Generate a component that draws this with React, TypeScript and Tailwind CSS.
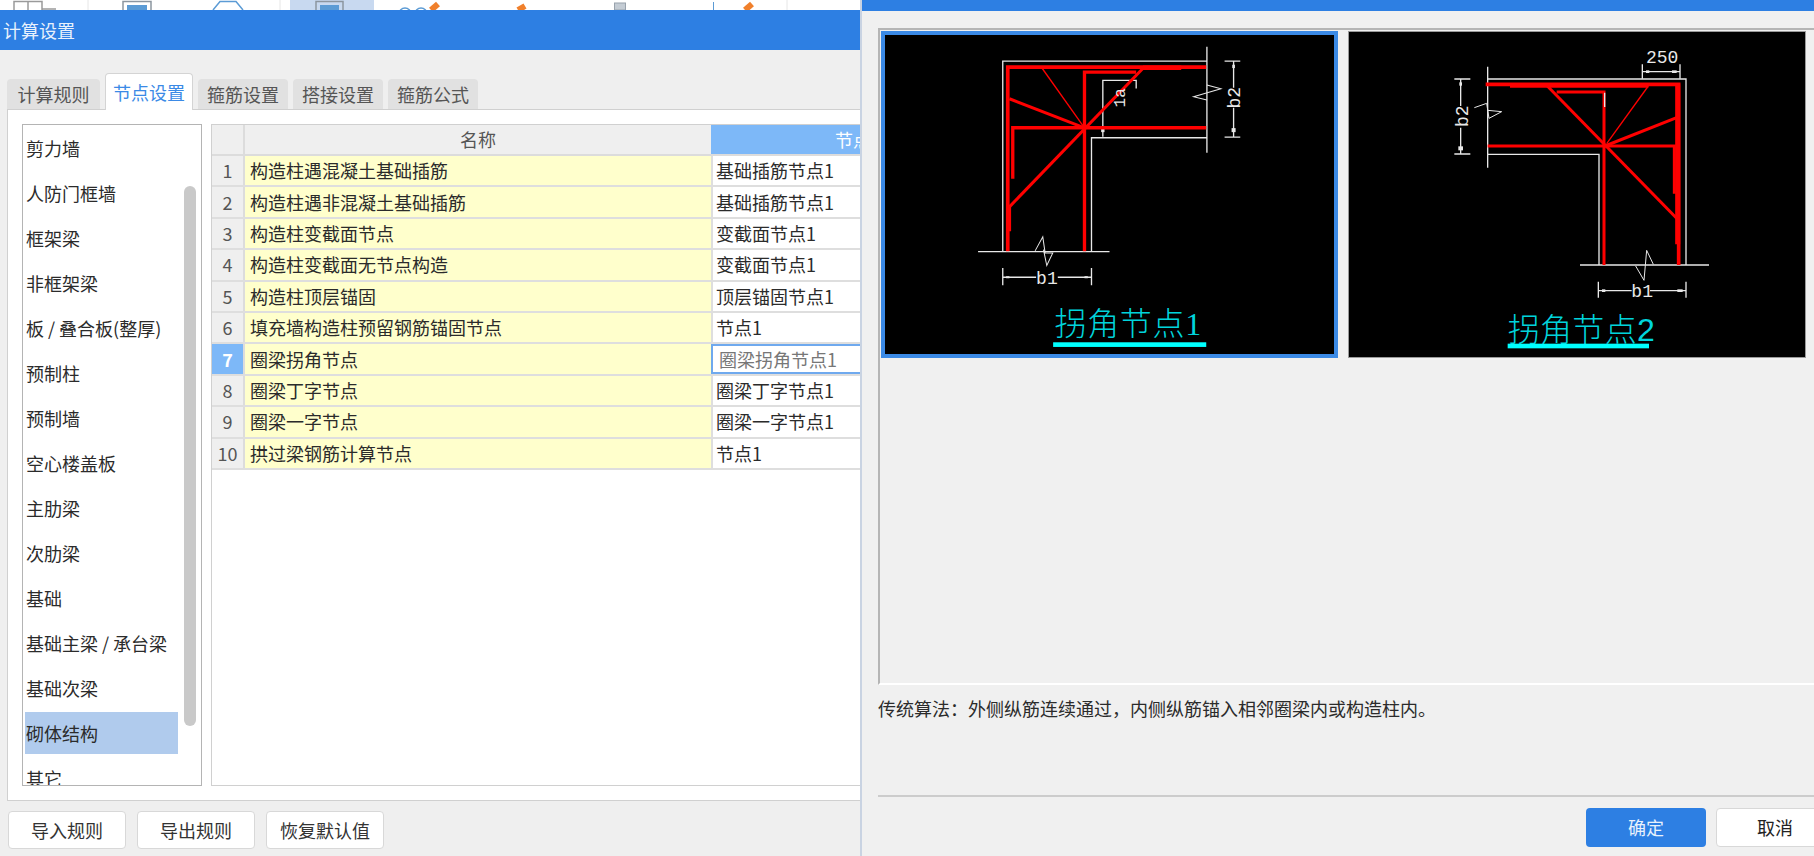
const font = "font-['Noto_Sans_CJK_SC','Liberation_Sans',sans-serif]";

const categories = [
  "剪力墙",
  "人防门框墙",
  "框架梁",
  "非框架梁",
  "板 / 叠合板(整厚)",
  "预制柱",
  "预制墙",
  "空心楼盖板",
  "主肋梁",
  "次肋梁",
  "基础",
  "基础主梁 / 承台梁",
  "基础次梁",
  "砌体结构",
  "其它",
];

const rows = [
  ["构造柱遇混凝土基础插筋", "基础插筋节点1"],
  ["构造柱遇非混凝土基础插筋", "基础插筋节点1"],
  ["构造柱变截面节点", "变截面节点1"],
  ["构造柱变截面无节点构造", "变截面节点1"],
  ["构造柱顶层锚固", "顶层锚固节点1"],
  ["填充墙构造柱预留钢筋锚固节点", "节点1"],
  ["圈梁拐角节点", "圈梁拐角节点1"],
  ["圈梁丁字节点", "圈梁丁字节点1"],
  ["圈梁一字节点", "圈梁一字节点1"],
  ["拱过梁钢筋计算节点", "节点1"],
];

const tabs = [
  { label: "计算规则", width: "w-[93px]" },
  { label: "节点设置", width: "w-[88px]" },
  { label: "箍筋设置", width: "w-[90px]" },
  { label: "搭接设置", width: "w-[90px]" },
  { label: "箍筋公式", width: "w-[90px]" },
];

function ToolbarStrip() {
  return (
    <div className="flex h-[10px] w-[860px] overflow-hidden bg-white">
      <svg width="860" height="10" viewBox="0 0 860 10" fill="none">
        <rect x="290" y="0" width="84" height="10" fill="#c8d9f0" />
        <path d="M14 10V1.5H42V10M28 1.5V10M42 9H56" stroke="#9a9a9a" strokeWidth="1.5" />
        <path d="M88 0V10M280 0V10" stroke="#e6e6e6" />
        <path d="M123 10V1.5H151V10" stroke="#8c96a0" strokeWidth="1.5" />
        <rect x="127" y="5" width="20" height="5" fill="#5b9bd5" />
        <path d="M213 10L220 1.5H236L243 10" stroke="#5b9bd5" strokeWidth="1.5" />
        <path d="M316 10V1.5H343V10" stroke="#8c96a0" strokeWidth="1.5" />
        <rect x="320" y="5" width="19" height="5" fill="#5b9bd5" />
        <circle cx="405" cy="14" r="6" stroke="#5b9bd5" strokeWidth="1.5" />
        <circle cx="421" cy="14" r="6" stroke="#5b9bd5" strokeWidth="1.5" />
        <path d="M431 10L438 4" stroke="#f0802c" strokeWidth="6" />
        <path d="M518 10L525 6" stroke="#f0802c" strokeWidth="6" />
        <rect x="614.5" y="3" width="11" height="7" fill="#c4ccd4" stroke="#98a2ac" />
        <path d="M713.5 2V10" stroke="#5b9bd5" />
        <path d="M745 10L752 4" stroke="#f0802c" strokeWidth="6" />
        <path d="M787 0V10" stroke="#e6e6e6" />
      </svg>
    </div>
  );
}

function LeftDialog() {
  return (
    <div className="flex w-[860px] shrink-0 flex-col">
      <ToolbarStrip />
      <div className="flex h-[40px] items-center bg-[#2d7fe3] pl-[3px] text-[18px] text-[#e8f1fc]">计算设置</div>
      <div className="flex flex-1 flex-col bg-[#efefef] pl-[7px]">
        <div className="flex h-[59px] items-end gap-[5px]">
          {tabs.map((tab) =>
            tab.label === "节点设置" ? (
              <div
                key={tab.label}
                className={`z-10 -mb-px flex h-[37px] items-center justify-center rounded-t-[4px] border border-b-0 border-[#d4d4d4] bg-white text-[18px] text-[#3b8ae6] ${tab.width}`}
              >
                {tab.label}
              </div>
            ) : (
              <div
                key={tab.label}
                className={`flex h-[30px] items-center justify-center rounded-t-[4px] bg-[#e1e1e1] text-[18px] text-[#555555] ${tab.width}`}
              >
                {tab.label}
              </div>
            ),
          )}
        </div>
        <div className="flex h-[692px] gap-[9px] border border-r-0 border-[#d0d0d0] bg-white pt-[14px] pl-[14px]">
          <CategoryList />
          <NodeTable />
        </div>
        <div className="flex gap-[11px] pt-[10px] pl-[1px]">
          {["导入规则", "导出规则", "恢复默认值"].map((label) => (
            <div
              key={label}
              className="flex h-[38px] w-[118px] items-center justify-center rounded-[4px] border border-[#d8d8d8] bg-white text-[18px] text-[#333333]"
            >
              {label}
            </div>
          ))}
        </div>
      </div>
    </div>
  );
}

function CategoryList() {
  return (
    <div className="relative flex h-[662px] w-[180px] shrink-0 flex-col gap-[3px] overflow-hidden border border-[#b4b4b4] pt-[2px] pl-[2px]">
      {categories.map((name) => (
        <div
          key={name}
          className={`flex h-[42px] w-[153px] shrink-0 items-center pl-[1px] text-[18px] text-[#2b2b2b] ${
            name === "砌体结构" ? "bg-[#b0cbed]" : ""
          }`}
        >
          {name}
        </div>
      ))}
      <div className="absolute top-[61px] right-[5px] h-[540px] w-[12px] rounded-full bg-[#c9c9c9]" />
    </div>
  );
}

function NodeTable() {
  return (
    <div className="h-[662px] flex-1 overflow-hidden border border-r-0 border-[#d0d0d0]">
      <div className="flex h-[31px] border-b-2 border-[#dcdcdc] bg-[#efefef] text-[18px] text-[#555555]">
        <div className="w-[33px] shrink-0 border-r-2 border-[#dcdcdc]" />
        <div className="flex w-[466px] shrink-0 items-center justify-center">名称</div>
        <div className="flex flex-1 items-center overflow-hidden bg-[#7db8f8] pl-[124px] whitespace-nowrap text-white">
          节点设置
        </div>
      </div>
      {rows.map(([name, value], i) => {
        const active = i === 6;
        return (
          <div key={name} className="flex h-[31.4px] border-b-2 border-[#dedede] text-[18px] text-[#2b2b2b]">
            <div
              className={`flex w-[33px] shrink-0 items-center justify-center border-r-2 border-[#dcdcdc] ${
                active ? "bg-[#7db8f8] font-bold text-white" : "bg-[#efefef] text-[#555555]"
              }`}
            >
              {i + 1}
            </div>
            <div className="flex w-[466px] shrink-0 items-center bg-[#ffffcc] pl-[5px]">{name}</div>
            {active ? (
              <div className="flex flex-1 items-center overflow-hidden border-2 border-r-0 border-[#6fa9ee] pl-[6px] whitespace-nowrap text-[#777777]">
                {value}
              </div>
            ) : (
              <div className="flex flex-1 items-center overflow-hidden border-l-2 border-[#dedede] pl-[3px] whitespace-nowrap">
                {value}
              </div>
            )}
          </div>
        );
      })}
    </div>
  );
}

function CornerOne() {
  return (
    <svg className="block h-[317px] w-[449px]" viewBox="47 47 1346 950" fill="none">
      <g stroke="#e8e8e8" strokeWidth="4">
        <path d="M400 695V125H1012M1012 82V400M666 695V355H1012M326 696H720" />
        <path d="M497 694L520 652L527 700H550L532 738L522 690" strokeWidth="3" />
        <path d="M400 745V797M666 745V797M400 773H500M565 773H666" />
        <path d="M1065 125H1112M1065 353H1112M1092 125V205M1092 265V353" />
        <path d="M1012 197L1054 208L972 232L1012 242" strokeWidth="3" />
        <path d="M800 207V183H700V352" />
      </g>
      <g fill="#e8e8e8">
        <rect x="410" y="770" width="10" height="6" />
        <rect x="645" y="770" width="10" height="6" />
        <rect x="1088" y="136" width="8" height="10" />
        <rect x="1086" y="326" width="12" height="12" />
        <rect x="695" y="326" width="10" height="12" />
      </g>
      <g stroke="#ff0000">
        <path d="M415 695V143H1010" strokeWidth="11" />
        <path d="M418 560V635M820 145H935" strokeWidth="14" />
        <path d="M645 695V158H800" strokeWidth="10" />
        <path d="M517 145L645 325" strokeWidth="4" />
        <path d="M420 238L645 325" strokeWidth="9" />
        <path d="M430 478V325H1010" strokeWidth="10" />
        <path d="M420 562L822 145" strokeWidth="9" />
      </g>
      <g fill="#e8e8e8" fontFamily="'Liberation Mono', monospace" fontSize="54">
        <text x="500" y="793">b1</text>
        <text x="1112" y="267" transform="rotate(-90 1112 267)">b2</text>
        <text x="765" y="264" fontSize="48" transform="rotate(-90 765 264)">1a</text>
      </g>
      <text
        x="555"
        y="945"
        fill="#00d4dc"
        fontFamily="'Liberation Serif', 'Noto Sans CJK SC', serif"
        fontWeight="300"
        fontSize="96"
        letterSpacing="2"
      >
        拐角节点1
      </text>
      <rect x="551" y="968" width="459" height="14" fill="#00ffff" />
    </svg>
  );
}

function CornerTwo() {
  return (
    <svg className="block h-[325px] w-[456px]" viewBox="27 33 1368 975" fill="none">
      <g stroke="#e8e8e8" strokeWidth="4">
        <path d="M443 137V440M443 174H1038V732M443 400H777V732M720 732H1107" />
        <path d="M343 174H391M343 399H391M362 174V255M362 320V399" />
        <path d="M775 782V830M1038 782V830M777 809H875M930 809H1038" />
        <path d="M907 130V173M1020 130V173M907 152H1020" />
        <path d="M403 260L440 247L447 292L485 272L443 268" strokeWidth="3" />
        <path d="M887 735L912 778L920 688L940 730" strokeWidth="3" />
      </g>
      <g fill="#e8e8e8">
        <rect x="918" y="148" width="10" height="8" />
        <rect x="996" y="148" width="14" height="8" />
        <rect x="358" y="184" width="8" height="10" />
        <rect x="355" y="376" width="14" height="12" />
        <rect x="786" y="805" width="10" height="8" />
        <rect x="1012" y="805" width="16" height="8" />
      </g>
      <g stroke="#ff0000">
        <path d="M437 190H1016V732" strokeWidth="11" />
        <path d="M510 195H925" strokeWidth="10" />
        <path d="M1013 190V670" strokeWidth="15" />
        <path d="M650 213H792V732" strokeWidth="9" />
        <path d="M622 195L1015 597" strokeWidth="9" />
        <path d="M800 368L925 195" strokeWidth="4" />
        <path d="M795 375L1010 290" strokeWidth="9" />
        <path d="M443 375H1003V518" strokeWidth="9" />
      </g>
      <path d="M794 215V258" stroke="#e8e8e8" strokeWidth="4" />
      <g fill="#e8e8e8" fontFamily="'Liberation Mono', monospace" fontSize="54">
        <text x="874" y="828">b1</text>
        <text x="384" y="318" transform="rotate(-90 384 318)">b2</text>
        <text x="918" y="126">250</text>
      </g>
      <text
        x="503"
        y="960"
        fill="#00d4dc"
        fontFamily="'Liberation Sans', 'Noto Sans CJK SC', sans-serif"
        fontWeight="300"
        fontSize="96"
        letterSpacing="1"
      >
        拐角节点2
      </text>
      <rect x="503" y="968" width="424" height="14" fill="#00ffff" />
    </svg>
  );
}

function RightDialog() {
  return (
    <div className="flex flex-1 flex-col overflow-hidden border-l-2 border-[#c9d3e2] bg-[#f0f0f0]">
      <div className="h-[11px] bg-[#2d7fe3]" />
      <div className="pt-[17px] pl-[16px]">
        <div className="h-[657px] border-t-2 border-b-2 border-l-2 border-[#b5b5b5] border-b-white">
          <div className="flex gap-[10px] pt-[1px] pl-[1px]">
            <div className="border-4 border-[#3b8ae6] bg-black">
              <CornerOne />
            </div>
            <div className="border border-[#9a9a9a] bg-black">
              <CornerTwo />
            </div>
          </div>
        </div>
      </div>
      <div className="h-[110px] pt-[10px] pl-[16px] text-[18px] text-[#2b2b2b]">
        传统算法：外侧纵筋连续通过，内侧纵筋锚入相邻圈梁内或构造柱内。
      </div>
      <div className="ml-[16px] border-t-2 border-[#cccccc]" />
      <div className="flex justify-end gap-[10px] pt-[11px]">
        <div className="flex h-[39px] w-[120px] items-center justify-center rounded-[4px] bg-[#2d7fe3] text-[18px] text-[#e8f1fc]">
          确定
        </div>
        <div className="-mr-[20px] flex h-[39px] w-[118px] items-center justify-center rounded-[4px] border border-[#d8d8d8] bg-white text-[18px] text-[#222222]">
          取消
        </div>
      </div>
    </div>
  );
}

export default function App() {
  return (
    <div className={`flex h-[856px] w-[1814px] overflow-hidden ${font}`}>
      <LeftDialog />
      <RightDialog />
    </div>
  );
}
